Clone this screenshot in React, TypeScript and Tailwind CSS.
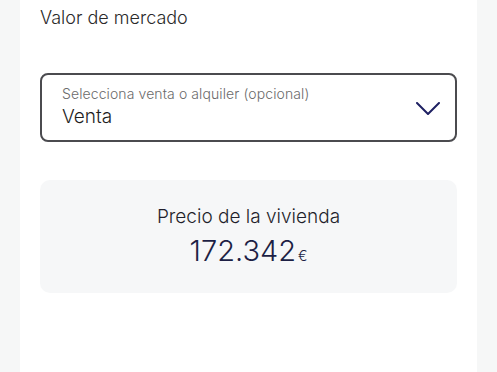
export default function App() {
  return (
    <div className="min-h-screen w-full bg-[#f6f7f7] flex" style={{ fontFamily: 'Inter, "Noto Sans", sans-serif' }}>
      <div className="mx-[20px] w-[457px] min-h-[372px] bg-white px-[20px] pt-[6px]">
        <h1 className="text-[18px] leading-[24px] font-light text-[#2a2a2a]">Valor de mercado</h1>

        <div className="mt-[43px] h-[69px] rounded-[8px] border-2 border-[#4b4b4f] flex items-center justify-between pl-[20px] pr-[15px]">
          <div className="flex flex-col">
            <span className="text-[14px] leading-[16px] font-light text-[#6b6b6b] tracking-[0.1px]">Selecciona venta o alquiler (opcional)</span>
            <span className="text-[19px] leading-[24px] font-light text-[#1e1e1e] mt-[3px]">Venta</span>
          </div>
          <svg width="24" height="13" viewBox="0 0 24 13" fill="none" className="mt-[2px]">
            <path d="M1 1 L12 12 L23 1" stroke="#1f2163" strokeWidth="2" strokeLinecap="round" strokeLinejoin="round" />
          </svg>
        </div>

        <div className="mt-[38px] h-[113px] rounded-[10px] bg-[#f6f7f8] flex flex-col items-center pt-[24px]">
          <span className="text-[19px] leading-[26px] font-light text-[#1f1f2b]">Precio de la vivienda</span>
          <div className="flex items-baseline mt-[2px]">
            <span className="text-[29px] leading-[38px] font-light text-[#1d1f45]">172.342</span>
            <span className="text-[14px] font-light text-[#1d1f45] ml-[2px]">€</span>
          </div>
        </div>
      </div>
    </div>
  );
}
